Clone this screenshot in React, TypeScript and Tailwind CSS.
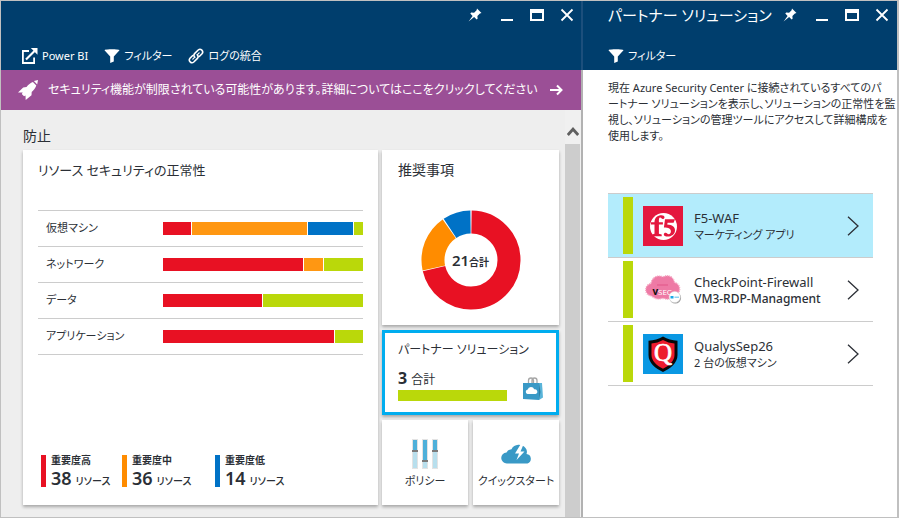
import type { ReactNode } from "react";

type Segment = { value: number; color: string };

const RED = "bg-[#e81123]";
const ORANGE = "bg-[#ff9712]";
const BLUE = "bg-[#0072c6]";
const GREEN = "bg-[#bad80a]";

const health: { name: string; segments: Segment[] }[] = [
  {
    name: "仮想マシン",
    segments: [
      { value: 28, color: RED },
      { value: 115, color: ORANGE },
      { value: 45, color: BLUE },
      { value: 9, color: GREEN },
    ],
  },
  {
    name: "ネットワーク",
    segments: [
      { value: 140, color: RED },
      { value: 19, color: ORANGE },
      { value: 39, color: GREEN },
    ],
  },
  {
    name: "データ",
    segments: [
      { value: 99, color: RED },
      { value: 100, color: GREEN },
    ],
  },
  {
    name: "アプリケーション",
    segments: [
      { value: 171, color: RED },
      { value: 28, color: GREEN },
    ],
  },
];

function PinIcon() {
  return (
    <svg width="14" height="14" viewBox="0 0 14 14" fill="currentColor" aria-hidden="true">
      <path d="M9 0.5 13.5 5l-1.6.4-2.5 2.5.2 2.8-.9.9-2.6-2.5L.6 13.6 4.6 7.900 2.300 5.400l.9-.9 2.900.2 2.500-2.500z" />
    </svg>
  );
}

function WindowControls() {
  const button = "flex h-4 items-center justify-center";
  return (
    <div className="flex items-center text-white">
      <button type="button" aria-label="ピン留め" className={`${button} w-4`}>
        <PinIcon />
      </button>
      <button type="button" aria-label="最小化" className={`${button} ml-4 w-4`}>
        <svg width="14" height="14" viewBox="0 0 14 14" aria-hidden="true">
          <path d="M1 11h12v2H1z" fill="currentColor" />
        </svg>
      </button>
      <button type="button" aria-label="最大化" className={`${button} ml-3 w-5`}>
        <svg width="14" height="14" viewBox="0 0 14 14" aria-hidden="true">
          <path d="M0 1h14v12H0zM2 5v6h10V5z" fill="currentColor" fillRule="evenodd" />
        </svg>
      </button>
      <button type="button" aria-label="閉じる" className={`${button} ml-3 w-4`}>
        <svg width="14" height="14" viewBox="0 0 14 14" aria-hidden="true">
          <path d="M1.500 1.500l11 11M12.500 1.500l-11 11" stroke="currentColor" strokeWidth="1.800" />
        </svg>
      </button>
    </div>
  );
}

function FilterIcon() {
  return (
    <svg width="16" height="14" viewBox="0 0 16 14" fill="currentColor" aria-hidden="true">
      <path d="M.5 1.200C.5-.1 15.500-.1 15.500 1.200L9.800 7.600V12.600L6.200 14V7.600z" />
    </svg>
  );
}

function PowerBiIcon() {
  return (
    <svg width="17" height="16" viewBox="0 0 17 16" fill="none" stroke="currentColor" aria-hidden="true">
      <path d="M8 3H1.900v12h11.200V9.500" strokeWidth="1.800" />
      <path d="M5 11.500 13.500 3" strokeWidth="2.200" />
      <path d="M9.800 0H16.500v6.700z" fill="currentColor" stroke="none" />
    </svg>
  );
}

function LinkIcon() {
  return (
    <svg width="16" height="16" viewBox="0 0 16 16" fill="none" stroke="currentColor" strokeWidth="1.600" strokeLinecap="round" aria-hidden="true">
      <path d="M6.800 9.200a2.700 2.700 0 0 1 0-3.800L10.200 2a2.700 2.700 0 0 1 3.800 3.800L11.300 8.500" />
      <path d="M9.200 6.800a2.700 2.700 0 0 1 0 3.800L5.800 14A2.700 2.700 0 0 1 2 10.200L4.700 7.500" />
      <path d="M4.800 11.200l1.500-1.500M9.700 6.300l1.500-1.500" strokeWidth="1.200" />
    </svg>
  );
}

function RocketIcon() {
  return (
    <svg width="20" height="20" viewBox="0 0 20 20" fill="currentColor" className="shrink-0" aria-hidden="true">
      <path d="M20 0l-.8 4.600-3.300-3.500zM14.900 2l3.400 3.600c-.8 2.300-2.500 4.600-4.600 6.500l-.2 3.100L7.700 20l-.2-4.500-1.500.8-2.200-2.200.9-1.700L0 12.600l5.200-5 3.300-.6C10.400 4.700 12.500 2.800 14.900 2z" />
    </svg>
  );
}

function ToolButton({ icon, children }: { icon: ReactNode; children: ReactNode }) {
  return (
    <button type="button" className="flex items-center gap-1 text-[11px] leading-4 whitespace-nowrap text-white">
      {icon}
      {children}
    </button>
  );
}

const RING = 2 * Math.PI * 38;

function Donut() {
  const parts = [
    { share: 15 / 21, start: 0, color: "#e81123" },
    { share: 4 / 21, start: 15 / 21, color: "#ff8c00" },
    { share: 2 / 21, start: 19 / 21, color: "#0072c6" },
  ];
  return (
    <svg width="100" height="100" viewBox="0 0 100 100" className="col-start-1 row-start-1" aria-hidden="true">
      {parts.map((p) => (
        <circle
          key={p.color}
          cx="50"
          cy="50"
          r="38"
          fill="none"
          stroke={p.color}
          strokeWidth="23"
          strokeDasharray={`${p.share * RING - 1} ${RING}`}
          transform={`rotate(${-90 + p.start * 360 + 0.75} 50 50)`}
        />
      ))}
    </svg>
  );
}

function Legend({ label, count, color }: { label: string; count: number; color: string }) {
  return (
    <li className="flex h-8 gap-[5px]">
      <span className={`w-[5px] ${color}`} />
      <div className="whitespace-nowrap">
        <div className="text-[10px] leading-[11px] font-bold">{label}</div>
        <div className="flex items-baseline gap-1">
          <span className="text-lg leading-6 font-semibold">{count}</span>
          <span className="text-[10px] leading-3 font-medium">リソース</span>
        </div>
      </div>
    </li>
  );
}

function BagIcon() {
  return (
    <svg width="20" height="24" viewBox="0 0 20 24" aria-hidden="true">
      <path d="M5.500 7V3.500a2.500 2.500 0 0 1 5 0V7M9 6V3.500a2.500 2.500 0 0 1 5 0V7" fill="none" stroke="#a7a7a7" strokeWidth="1.300" />
      <path d="M0 6h16v17L0 22z" fill="#3999c6" />
      <path d="M16 6h3l1 14.500-4 2.500z" fill="#59b4d9" />
      <path d="M16 6l1.500 9L16 23z" fill="#2f7fa5" />
      <path d="M4.500 17a2.300 2.300 0 0 1 .2-4.500 3.400 3.400 0 0 1 6.500-.2 2.400 2.400 0 0 1 1.300 4.700z" fill="#fff" />
    </svg>
  );
}

function PolicyIcon() {
  return (
    <svg width="26" height="30" viewBox="0 0 26 30" aria-hidden="true">
      <path d="M0 0h6v30H0zM10 0h6v30h-6zM20 0h6v30h-6z" fill="#e3e3e3" />
      <path d="M1 1h4v28H1zM11 1h4v28h-4zM21 1h4v28h-4z" fill="#b8dfed" />
      <path d="M1 1h4v11H1zM21 1h4v11h-4zM11 1h4v21h-4z" fill="#4eb0da" />
      <path d="M0 11h6v2H0zM10 21h6v2h-6zM20 11h6v2h-6z" fill="#7a7a7a" />
    </svg>
  );
}

function QuickStartIcon() {
  return (
    <svg width="31" height="22" viewBox="0 0 31 22" aria-hidden="true">
      <path d="M6 20.500A5.500 5.500 0 0 1 5.500 9.500 6 6 0 0 1 10.500 6.200 8.300 8.300 0 0 1 24.500 5 6 6 0 0 1 25.500 11 4.900 4.900 0 0 1 26.500 20.500z" fill="#3999c6" />
      <path d="M19.500 1.500 14 10.500h4L15.500 17l8-8.500h-4l3-7z" fill="#fff" />
    </svg>
  );
}

function F5Logo() {
  return (
    <svg width="40" height="40" viewBox="0 0 40 40" aria-hidden="true">
      <path d="M0 0h40v40H0z" fill="#e4173e" />
      <circle cx="20.500" cy="20.500" r="13.500" fill="#fff" />
      <path d="M8 16.200h3.500c0-4.500 3-7 7-7 1.800 0 3 .8 3 2s-.8 1.800-1.800 1.800-1.400-1.600-2.600-1.600c-1.100 0-1.300 1.600-1.200 4.800h4v2.300h-4v9.300l2.800.8v1.600H9.400v-1.600l2.100-.8v-9.300H8z" fill="#e4173e" />
      <path d="M22 13.200h10l-1.400 3.600h-6l-.4 1.700c5 .2 7.800 2.400 7.800 5.700 0 4-3.500 6.300-7.300 6.300-2.200 0-3.900-.8-3.900-2.100 0-1 .8-1.700 1.800-1.700 1.500 0 1.700 1.500 3.100 1.500s2.200-1.200 2.200-2.900c0-2.600-2.200-3.900-7-3.900z" fill="#e4173e" />
    </svg>
  );
}

function VsecLogo() {
  return (
    <svg width="40" height="40" viewBox="0 0 40 40" aria-hidden="true">
      <path d="M8.500 26a6.300 6.300 0 0 1-.5-12.500C9 7 15 4.500 20 7c5-3 10.500-.5 11.500 5.500 6.500 1 7 11 .5 13-4 4-9 4.500-12 2.500-4 2-8 1-11.500-2z" fill="#ee7aa5" stroke="#f5a9c4" strokeWidth="1.500" strokeDasharray="1 1" />
      <path d="M14 15h11" stroke="#dd4b80" strokeWidth=".8" />
      <text x="9.500" y="25" fontSize="10" fontWeight="700" fill="#111" fontFamily="Open Sans, sans-serif">v</text>
      <text x="15" y="25" fontSize="8" fill="#fff" fontFamily="Open Sans, sans-serif">SEC</text>
      <circle cx="32.300" cy="27.800" r="5.800" fill="#999" />
      <circle cx="31.700" cy="27" r="5.600" fill="#fff" stroke="#ddd" strokeWidth=".5" />
      <path d="M27.500 26h3v2.500h-3z" fill="#16a9e8" />
      <path d="M31.500 27.200h4.500" stroke="#74c9ed" strokeWidth="1.200" />
    </svg>
  );
}

function QualysLogo() {
  return (
    <svg width="40" height="40" viewBox="0 0 40 40" aria-hidden="true">
      <path d="M0 0h40v40H0z" fill="#0a98e3" />
      <path d="M20 2.500c4.500 2.500 9 4 14.500 4.200V21c0 8-7 13.500-14.500 17C12.500 34.500 5.500 29 5.500 21V6.700C11 6.500 15.500 5 20 2.500z" fill="#080808" />
      <path d="M20 6c3.700 2 7.200 3.200 11.500 3.500V21c0 6.200-5.500 10.800-11.500 13.800C14 31.800 8.500 27.200 8.500 21V9.500C12.800 9.200 16.300 8 20 6z" fill="#ed1c2e" />
      <text x="20" y="26.500" textAnchor="middle" fontSize="25" fill="#fff" stroke="#fff" strokeWidth=".7" fontFamily="Liberation Serif, serif">Q</text>
    </svg>
  );
}

const partners = [
  { name: "F5-WAF", detail: "マーケティング アプリ", logo: <F5Logo />, selected: true, strong: false },
  { name: "CheckPoint-Firewall", detail: "VM3-RDP-Managment", logo: <VsecLogo />, selected: false, strong: true },
  { name: "QualysSep26", detail: "2 台の仮想マシン", logo: <QualysLogo />, selected: false, strong: false },
];

const card = "bg-white shadow-[0_2px_3px_rgba(0,0,0,0.3)]";

export default function App() {
  return (
    <div className="flex min-h-screen border border-r-2 border-[#c0c0c0] bg-white font-['Noto_Sans','Noto_Sans_CJK_JP',sans-serif] text-[#2b2f36] [font-feature-settings:'palt']">
      <main className="flex min-w-0 flex-1 flex-col">
        <header className="bg-[#003e6d] pr-1.5 pl-5">
          <div className="flex h-7 items-center justify-end">
            <WindowControls />
          </div>
          <div className="flex h-[41px] items-center gap-4 pt-4 pb-1">
            <ToolButton icon={<PowerBiIcon />}>Power BI</ToolButton>
            <ToolButton icon={<FilterIcon />}>フィルター</ToolButton>
            <ToolButton icon={<LinkIcon />}>ログの統合</ToolButton>
          </div>
        </header>

        <button type="button" className="flex h-10 items-center bg-[#9b4f96] pl-[17px] text-left text-xs whitespace-nowrap text-white">
          <RocketIcon />
          <span className="ml-2.5">セキュリティ機能が制限されている可能性があります。詳細についてはここをクリックしてください</span>
          <svg className="ml-3 shrink-0" width="13" height="12" viewBox="0 0 13 12" fill="none" stroke="currentColor" strokeWidth="2" aria-hidden="true">
            <path d="M0 6h11M7 1.500 11.500 6 7 10.500" />
          </svg>
        </button>

        <div className="flex flex-1 bg-[#eee]">
          <div className="flex flex-1 flex-col pr-1.5 pb-3 pl-[22px]">
            <h2 className="h-10 pt-4 text-sm leading-5">防止</h2>
            <div className="flex flex-1 gap-1">
              <section className={`flex flex-1 flex-col px-[15px] pt-2.5 pb-[18px] ${card}`}>
                <h3 className="text-[13px] leading-5">リソース セキュリティの正常性</h3>
                <ul className="mt-[30px] border-t border-[#ccc]">
                  {health.map((row) => (
                    <li key={row.name} className="flex h-9 items-center border-b border-[#ccc]">
                      <span className="flex-1 pl-2 text-[11px] whitespace-nowrap">{row.name}</span>
                      <div className="flex h-[13px] w-[200px] gap-px">
                        {row.segments.map((s) => (
                          <span key={s.color} className={s.color} style={{ flex: `${s.value} 0 0` }} />
                        ))}
                      </div>
                    </li>
                  ))}
                </ul>
                <ul className="mt-auto grid grid-cols-[81px_93px_auto] pl-[3px]">
                  <Legend label="重要度高" count={38} color="bg-[#e81123]" />
                  <Legend label="重要度中" count={36} color="bg-[#ff8c00]" />
                  <Legend label="重要度低" count={14} color="bg-[#0072c6]" />
                </ul>
              </section>

              <div className="flex w-[177px] flex-col gap-[5px]">
                <section className={`flex h-[175px] flex-col px-4 pt-2.5 ${card}`}>
                  <h3 className="text-sm leading-5">推奨事項</h3>
                  <div className="mt-[30px] grid place-items-center">
                    <Donut />
                    <div className="col-start-1 row-start-1 flex items-baseline font-semibold">
                      <span className="text-[15px]">21</span>
                      <span className="text-[10px]">合計</span>
                    </div>
                  </div>
                </section>
                <section className={`h-[85px] border-3 border-[#00adef] px-[13px] pt-[7px] ${card}`}>
                  <h3 className="text-xs leading-5 whitespace-nowrap">パートナー ソリューション</h3>
                  <div className="mt-1.5 flex items-end justify-between">
                    <div className="w-[109px]">
                      <div className="flex items-baseline gap-1 leading-6">
                        <span className="text-base leading-6 font-bold">3</span>
                        <span className="text-xs">合計</span>
                      </div>
                      <div className="h-[11px] bg-[#bad80a]" />
                    </div>
                    <BagIcon />
                  </div>
                </section>
                <div className="grid flex-1 grid-cols-2 gap-[5px] text-[11px] leading-4">
                  <button type="button" className={`flex flex-col items-center pt-[19px] ${card}`}>
                    <PolicyIcon />
                    <span className="mt-1">ポリシー</span>
                  </button>
                  <button type="button" className={`flex flex-col items-center pt-[23px] whitespace-nowrap ${card}`}>
                    <QuickStartIcon />
                    <span className="mt-2">クイックスタート</span>
                  </button>
                </div>
              </div>
            </div>
          </div>

          <div className="flex w-4 flex-col bg-[#f0f0f0]">
            <svg className="mt-4 ml-0.5" width="12" height="11" viewBox="0 0 12 11" fill="none" stroke="#606060" strokeWidth="2.800" aria-hidden="true">
              <path d="M.8 9 6 3.200 11.200 9" />
            </svg>
            <div className="mt-[7px] w-[15px] flex-1 bg-[#cdcdcd]" />
          </div>
        </div>
      </main>

      <aside className="flex w-[316px] shrink-0 flex-col border-l-2 border-[#b2b2b2] bg-white">
        <header className="-ml-0.5 border-l-2 border-[#1c4f7c] bg-[#003e6d] pr-[7px] pl-[25px]">
          <div className="flex h-7 items-center justify-between">
            <h2 className="text-[15px] leading-6 whitespace-nowrap text-white">パートナー ソリューション</h2>
            <WindowControls />
          </div>
          <div className="flex h-[41px] items-center pt-4 pb-1">
            <ToolButton icon={<FilterIcon />}>フィルター</ToolButton>
          </div>
        </header>
        <div className="pr-6 pl-[25px]">
          <p className="mt-2.5 h-[113px] text-[11px] leading-4 whitespace-nowrap">
            現在 Azure Security Center に接続されているすべてのパ
            <br />
            ートナー ソリューションを表示し、ソリューションの正常性を監
            <br />
            視し、ソリューションの管理ツールにアクセスして詳細構成を
            <br />
            使用します。
          </p>
          <ul className="border-t border-[#ccc]">
            {partners.map((p) => (
              <li key={p.name} className="border-b border-[#ccc]">
                <button type="button" className={`flex h-[63px] w-full items-center pr-3.5 pl-[15px] text-left ${p.selected ? "bg-[#b3ecfc]" : "bg-white"}`}>
                  <span className="mr-2.5 h-[57px] w-2.5 bg-[#bad80a]" />
                  {p.logo}
                  <span className="ml-[11px] flex-1 whitespace-nowrap">
                    <span className="block text-[13px] leading-[18px]">{p.name}</span>
                    <span className={`block leading-4 ${p.strong ? "text-xs font-medium" : "text-[11px]"}`}>{p.detail}</span>
                  </span>
                  <svg width="12" height="20" viewBox="0 0 12 20" fill="none" stroke="#2b2f36" strokeWidth="1.300" aria-hidden="true">
                    <path d="M1 .8 11 10 1 19.200" />
                  </svg>
                </button>
              </li>
            ))}
          </ul>
        </div>
      </aside>
    </div>
  );
}
